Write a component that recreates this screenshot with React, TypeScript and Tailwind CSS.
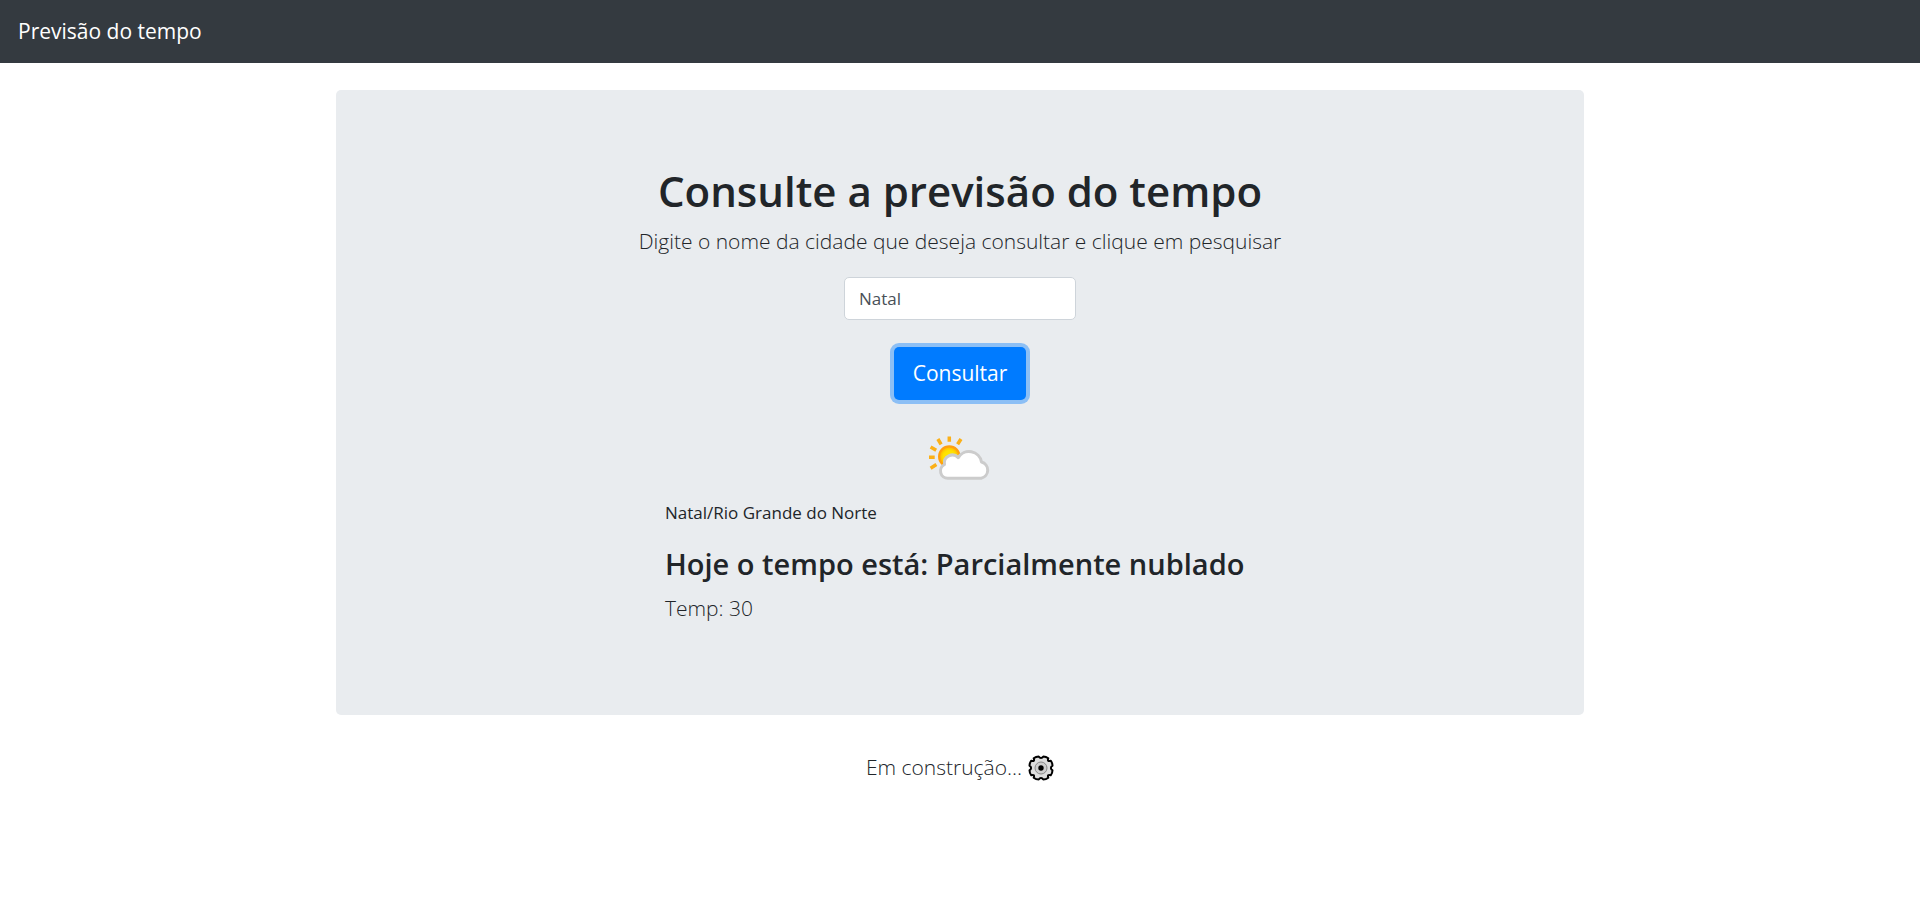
import { useState } from "react";

function PartlyCloudyIcon() {
  return (
    <svg viewBox="0 0 64 44" className="h-11 w-16" role="img" aria-label="Parcialmente nublado">
      <defs>
        <radialGradient id="sun" cx="0.5" cy="0.5" r="0.5">
          <stop offset="0" stopColor="#ffee00" />
          <stop offset="0.6" stopColor="#ffe000" />
          <stop offset="1" stopColor="#ffb000" />
        </radialGradient>
      </defs>
      <g stroke="#fbb018" strokeWidth="3.500" strokeLinecap="butt">
        <path d="M21.3 0.500v5.300M9.900 3l3.200 5.300M33 3l-3.400 5.300M2.600 11l5.600 3.200M1 21.200h5.700M2.600 32.200l5.800-3.600" />
      </g>
      <circle cx="21.3" cy="20.500" r="10.200" fill="url(#sun)" stroke="#ffa010" strokeWidth="2.200" />
      <path
        d="M20 42.300A7.300 7.300 0 0 1 16.500 28.500 8 8 0 0 1 30.300 21.700 12.600 12.600 0 0 1 53.500 26 8.400 8.400 0 0 1 53.200 42.300Z"
        fill="#fff"
        stroke="#cccccc"
        strokeWidth="3"
        strokeLinejoin="round"
      />
    </svg>
  );
}

function GearIcon() {
  return (
    <svg viewBox="-13 -13 26 26" className="size-[26px]" aria-hidden="true">
      <path
        d="M0-9.900Q1.300-9.900 2.300-11.500 5-11.500 7.300-9.700 6.600-7.900 7.200-7.200 7.900-6.600 9.700-7.300 11.500-5 11.500-2.300 9.900-1.300 9.900 0 9.900 1.300 11.500 2.300 11.500 5 9.700 7.300 7.900 6.600 7.200 7.200 6.600 7.900 7.300 9.700 5 11.500 2.300 11.500 1.300 9.900 0 9.900-1.300 9.900-2.300 11.500-5 11.500-7.300 9.700-6.600 7.900-7.200 7.200-7.900 6.600-9.700 7.300-11.500 5-11.500 2.300-9.900 1.300-9.900 0-9.900-1.300-11.500-2.300-11.500-5-9.700-7.300-7.900-6.600-7.200-7.200-6.600-7.900-7.300-9.700-5-11.500-2.300-11.500-1.300-9.900 0-9.900Z"
        fill="#dedede"
        stroke="#000"
        strokeWidth="2"
        strokeLinejoin="round"
      />
      <circle r="6" fill="#cfcfcf" stroke="#8a8a8a" strokeWidth="1" />
      <circle r="2.700" fill="#000" />
    </svg>
  );
}

export default function App() {
  const [city, setCity] = useState("Natal");

  return (
    <div className="font-['Open_Sans',sans-serif] text-[#212529]">
      <nav className="flex bg-[#343a40] px-[18px] py-4">
        <a href="#" className="text-[21px] leading-[31px] text-white">
          Previsão do tempo
        </a>
      </nav>

      <main className="mx-auto mt-[27px] max-w-[1248px]">
        <section className="flex flex-col items-center rounded-[5px] bg-[#e9ecef] px-9 pt-[74px] pb-[90px]">
          <h1 className="text-center text-[42px] leading-[53px] font-semibold">
            Consulte a previsão do tempo
          </h1>
          <p className="mt-2 text-center text-[21px] leading-[33px] font-light">
            Digite o nome da cidade que deseja consultar e clique em pesquisar
          </p>
          <form className="mt-[19px] flex flex-col items-center" onSubmit={(e) => e.preventDefault()}>
            <input
              type="text"
              aria-label="Cidade"
              value={city}
              onChange={(e) => setCity(e.target.value)}
              className="h-[43px] w-[232px] rounded-[5px] border border-[#ced4da] bg-white px-[14px] text-[17px] text-[#495057] outline-none"
            />
            <button
              type="submit"
              className="mt-[27px] h-[53px] rounded-[5px] bg-[#007bff] px-[19px] text-[21px] text-white ring-4 ring-[#007bff]/40"
            >
              Consultar
            </button>
          </form>
          <div className="mt-9">
            <PartlyCloudyIcon />
          </div>
          <div className="mt-[19px] w-full max-w-[590px]">
            <p className="text-[17px] leading-[28px]">Natal/Rio Grande do Norte</p>
            <h2 className="mt-[18px] text-[29px] leading-[37px] font-semibold">
              Hoje o tempo está: Parcialmente nublado
            </h2>
            <p className="mt-[10px] text-[21px] leading-[33px] font-light">Temp: 30</p>
          </div>
        </section>

        <footer className="mt-9 flex items-center justify-center gap-1.5">
          <p className="text-[21px] leading-[33px] font-light">Em construção...</p>
          <GearIcon />
        </footer>
      </main>
    </div>
  );
}
